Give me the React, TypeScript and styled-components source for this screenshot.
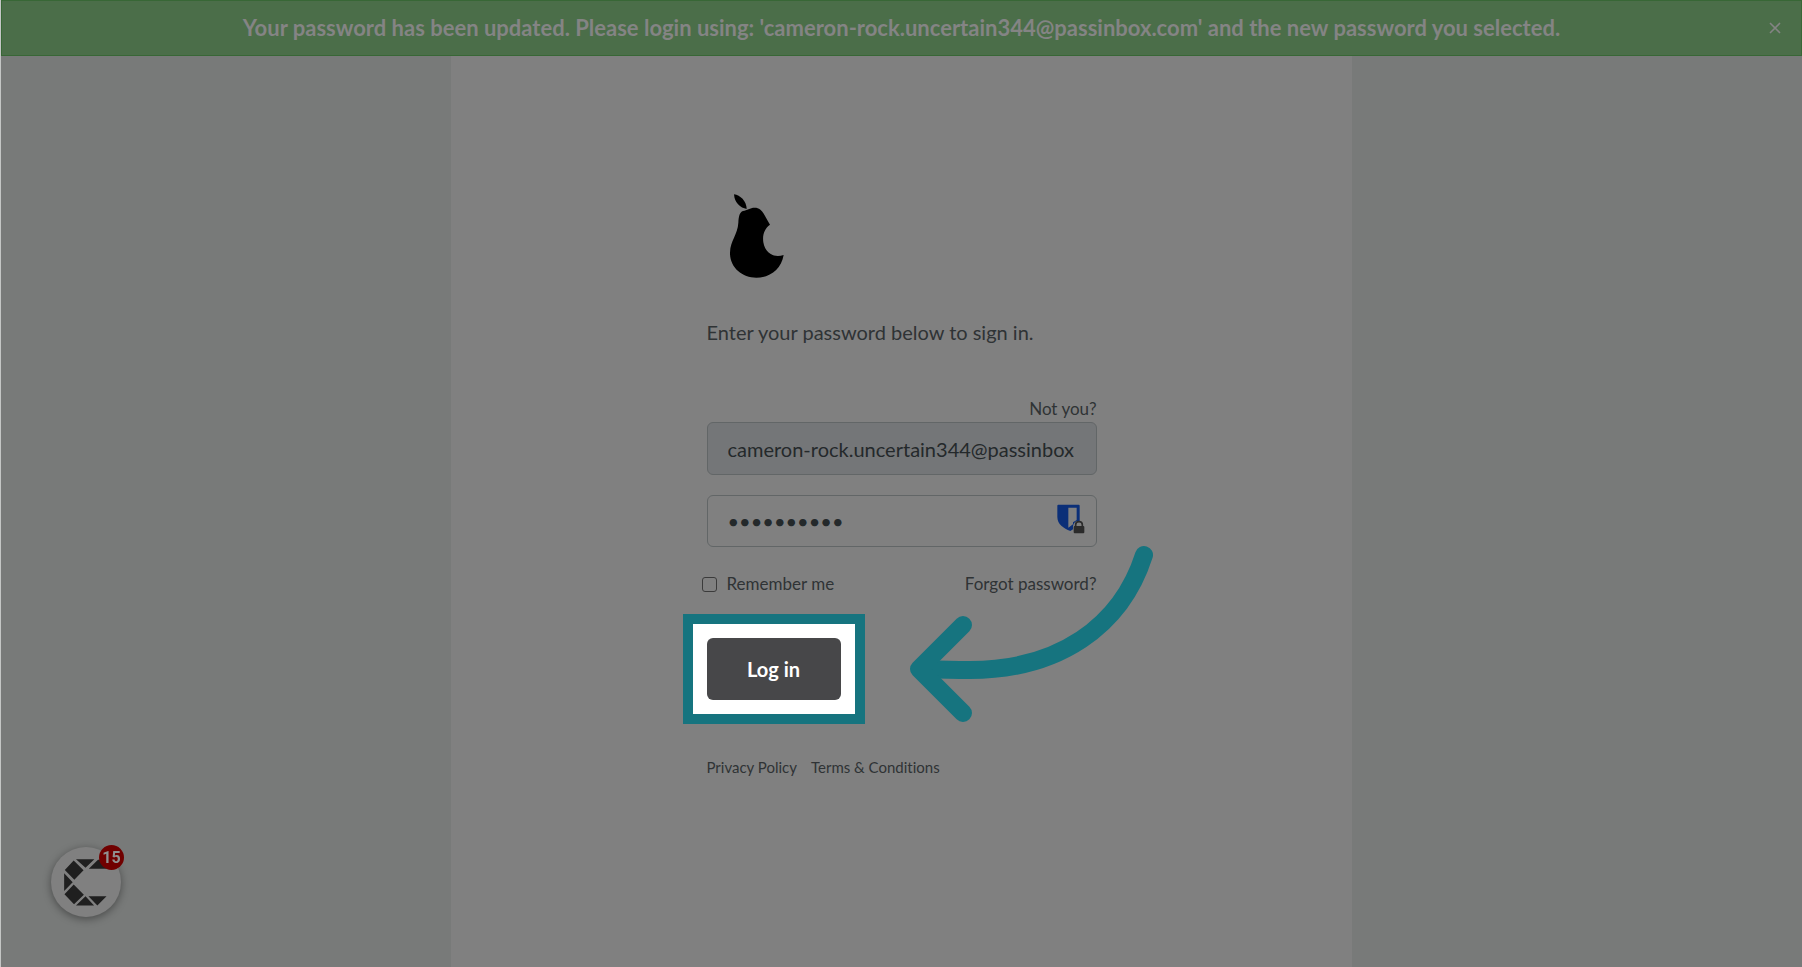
import React from 'react';
import styled, { createGlobalStyle } from 'styled-components';

const teal = '#16747f';

const GlobalStyle = createGlobalStyle`
  * { box-sizing: border-box; }
  body {
    margin: 0;
    background: #787a79;
    color: #2f3335;
    font-family: Lato, 'Liberation Sans', sans-serif;
    font-size: 20px;
    line-height: 28px;
    font-variant-ligatures: none;
  }
`;

const Page = styled.div`
  display: flex;
  flex-direction: column;
  min-height: 100vh;
  border-left: 1px solid #c4c6c5;
`;

const Banner = styled.div`
  display: flex;
  align-items: center;
  min-height: 56px;
  padding: 0 18px;
  background: #4b6e49;
  border: 1px solid #386736;
  color: #848484;
`;

const BannerText = styled.p`
  flex: 1;
  margin: 0;
  padding-left: 16px;
  text-align: center;
  font-size: 22px;
  font-weight: 700;
`;

const CloseButton = styled.button`
  display: flex;
  padding: 0;
  border: 0;
  background: none;
  color: inherit;
`;

const Panel = styled.main`
  flex: 1;
  display: flex;
  justify-content: center;
  width: 50%;
  min-width: 430px;
  margin: 0 auto;
  padding: 130px 20px 40px;
  background: #808080;
`;

const Content = styled.div`
  width: 100%;
  max-width: 390px;
`;

const Logo = styled.svg`
  display: block;
  width: 100px;
  height: 100px;
`;

const Intro = styled.p`
  margin: 32px 0 50px;
`;

const TextLink = styled.a<{ $small?: boolean }>`
  color: inherit;
  text-decoration: none;
  font-size: ${(p) => (p.$small ? 15 : 17)}px;
`;

const NotYou = styled.div`
  display: flex;
  justify-content: flex-end;
  line-height: 26px;
`;

const Field = styled.div<{ $filled?: boolean }>`
  display: flex;
  align-items: center;
  height: ${(p) => (p.$filled ? 53 : 52)}px;
  margin-bottom: 20px;
  padding: 0 ${(p) => (p.$filled ? 22 : 11)}px 0 20px;
  border: 1px solid #626667;
  border-radius: 6px;
  background: ${(p) => (p.$filled ? '#747678' : 'transparent')};
`;

const Input = styled.input`
  flex: 1;
  min-width: 0;
  height: 100%;
  padding: 0;
  border: 0;
  outline: 0;
  background: none;
  color: #24292b;
  font: inherit;
`;

const VaultIcon = styled.svg`
  width: 28px;
  height: 30px;
  margin-bottom: 4px;
`;

const Options = styled.div`
  display: flex;
  align-items: center;
  justify-content: space-between;
  margin: 23px 0 40px;
  font-size: 17px;
`;

const Remember = styled.label`
  display: flex;
  align-items: center;
  gap: 10px;
  margin-left: -5px;
`;

const Checkbox = styled.input`
  appearance: none;
  width: 15px;
  height: 15px;
  margin: 0;
  border: 1px solid #3b3b3b;
  border-radius: 3px;
`;

const Highlight = styled.div`
  position: relative;
  width: 134px;
  background: #fff;
  box-shadow: 0 0 0 14px #fff, 0 0 0 24px ${teal};
`;

const LoginButton = styled.button`
  display: block;
  width: 100%;
  height: 62px;
  border: 0;
  border-radius: 6px;
  background: #474749;
  color: #fff;
  font: inherit;
  font-weight: 700;
`;

const Arrow = styled.svg`
  position: absolute;
  left: 183px;
  top: -108px;
  width: 280px;
  height: 200px;
  pointer-events: none;
`;

const Footer = styled.nav`
  display: flex;
  gap: 14px;
  margin-top: 53px;
`;

const ChatButton = styled.button`
  position: fixed;
  left: 51px;
  bottom: 50px;
  width: 70px;
  height: 70px;
  padding: 0;
  border: 0;
  border-radius: 50%;
  background: #808080;
  box-shadow: 0 2px 8px rgba(0, 0, 0, 0.4);
`;

const ChatMark = styled.svg`
  display: block;
  width: 70px;
  height: 70px;
`;

const Count = styled.span`
  position: absolute;
  top: -2px;
  right: -3px;
  width: 25px;
  height: 25px;
  border-radius: 50%;
  background: #700000;
  color: #909090;
  font: 700 16px/25px Roboto, sans-serif;
  text-align: center;
`;

export default function App() {
  return (
    <Page>
      <GlobalStyle />
      <Banner role="status">
        <BannerText>
          Your password has been updated. Please login using: 'cameron-rock.uncertain344@passinbox.com' and the new
          password you selected.
        </BannerText>
        <CloseButton type="button" aria-label="Close">
          <svg width="16" height="16" viewBox="0 0 16 16" stroke="currentColor" strokeWidth="1.6">
            <path d="M3 3L13 13M13 3L3 13" />
          </svg>
        </CloseButton>
      </Banner>
      <Panel>
        <Content>
          <Logo viewBox="20 18 300 300" role="img" aria-label="Pear">
            <path d="M101 43C120 46 138 62 139 87C120 84 102 68 101 43Z" />
            <path d="M128 93C140 91 149 83 163 83C187 83 192 107 209 134C192 146 186 165 189 187C194 219 220 235 250 225C242 268 210 293 168 293C125 293 88 262 89 218C90 180 112 165 114 128C115 108 118 97 128 93Z" />
          </Logo>
          <Intro>Enter your password below to sign in.</Intro>
          <form onSubmit={(e) => e.preventDefault()}>
            <NotYou>
              <TextLink href="#switch">Not you?</TextLink>
            </NotYou>
            <Field $filled>
              <Input type="text" aria-label="Email" readOnly value="cameron-rock.uncertain344@passinbox.com" />
            </Field>
            <Field>
              <Input type="password" aria-label="Password" defaultValue="abcdefghij" />
              <VaultIcon viewBox="80 45 84 90" aria-hidden="true">
                <path
                  fillRule="evenodd"
                  fill="#0b2f78"
                  d="M84 47H145Q148 47 148 50V96H142Q130 98 128 112V121L120 126C100 118 81 106 81 84V50Q81 47 84 47ZM114 56V116L128 106V100L139 93V56Z"
                />
                <rect x="130" y="111" width="32" height="22" rx="3" fill="#2b2b2b" />
                <path d="M136 112V107Q136 98 146 98T156 107V112" fill="none" stroke="#2b2b2b" strokeWidth="5" />
              </VaultIcon>
            </Field>
            <Options>
              <Remember>
                <Checkbox type="checkbox" />
                Remember me
              </Remember>
              <TextLink href="#forgot">Forgot password?</TextLink>
            </Options>
            <Highlight>
              <LoginButton type="submit">Log in</LoginButton>
              <Arrow viewBox="0 0 280 200" fill="none" stroke={teal} strokeWidth="18" strokeLinecap="round" strokeLinejoin="round">
                <path d="M254 25C231 97 168 140 80 140Q60 140 34 139" />
                <path d="M73 95L29 139L73 183" />
              </Arrow>
            </Highlight>
          </form>
          <Footer>
            <TextLink $small href="#privacy">Privacy Policy</TextLink>
            <TextLink $small href="#terms">Terms &amp; Conditions</TextLink>
          </Footer>
        </Content>
      </Panel>
      <ChatButton type="button" aria-label="Open chat, 15 unread">
        <ChatMark viewBox="61 51 213 213" fill="#1f1f1f">
          <path d="M137 88H193L166 114ZM176 117L204 90H235L230 117ZM130 92L160 122L132 151L103 121ZM101 131L127 158L101 185ZM130 165L161 196L131 225L102 195ZM166 201L192 229H137ZM175 201H230L202 229Z" />
        </ChatMark>
        <Count>15</Count>
      </ChatButton>
    </Page>
  );
}
